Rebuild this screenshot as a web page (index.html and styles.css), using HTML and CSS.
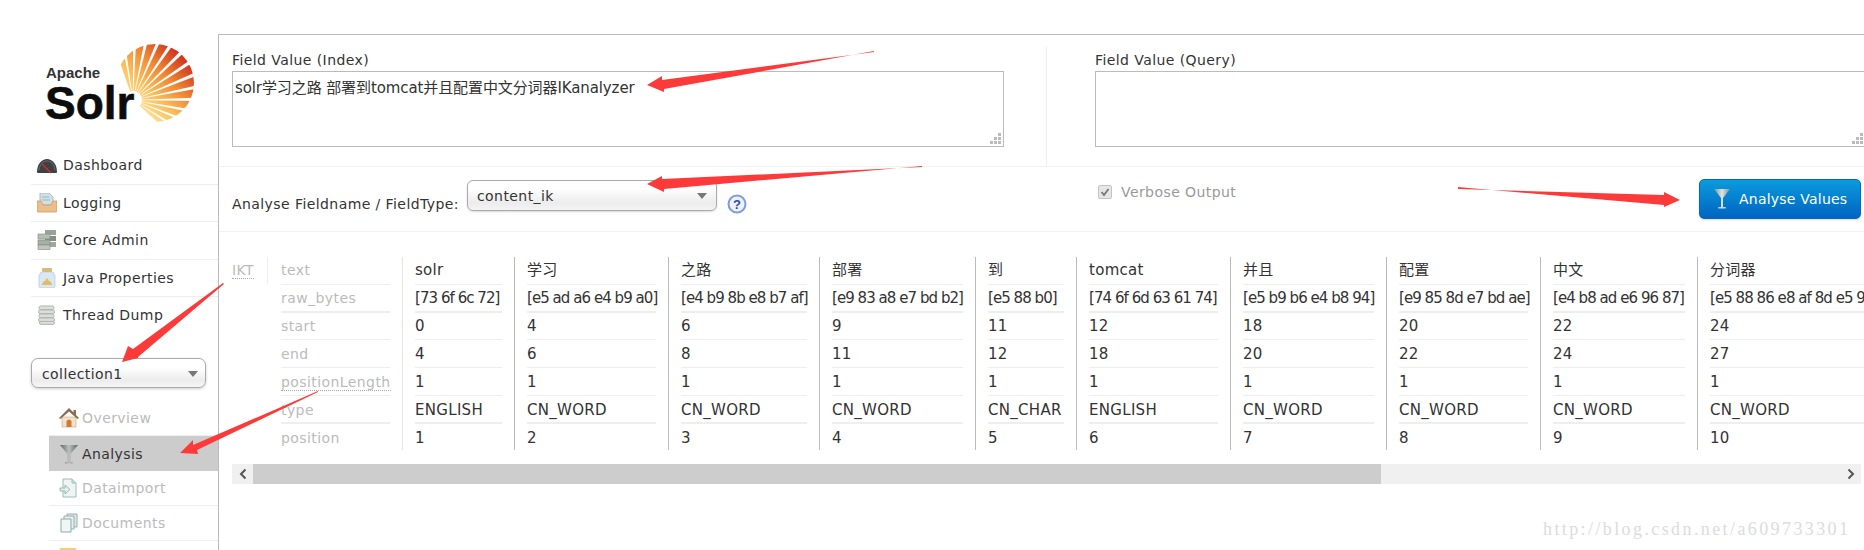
FILE: index.html
```html
<!DOCTYPE html>
<html lang="en">
<head>
<meta charset="utf-8">
<title>Solr Admin - Analysis</title>
<link rel="stylesheet" href="styles.css">
</head>
<body>
<div class="page">
  <aside class="sidebar">
    <svg class="logo" width="187" height="147" viewBox="31 0 187 147">
      <defs>
        <linearGradient id="sun" gradientUnits="userSpaceOnUse" x1="128" y1="112" x2="182" y2="58">
          <stop offset="0" stop-color="#fff0b4"/>
          <stop offset="0.38" stop-color="#fcc25e"/>
          <stop offset="0.7" stop-color="#ee8432"/>
          <stop offset="1" stop-color="#d3361f"/>
        </linearGradient>
        <clipPath id="disc"><circle cx="155" cy="83" r="39"/></clipPath>
      </defs>
      <g clip-path="url(#disc)" fill="url(#sun)">
        <path d="M133 100L192.4 153.5L199.3 144.7Z"/>
        <path d="M133 100L201.6 141.2L206.6 131.3Z"/>
        <path d="M133 100L208.2 127.4L211.2 116.6Z"/>
        <path d="M133 100L212 112.5L213 101.4Z"/>
        <path d="M133 100L212.9 97.2L211.8 86.1Z"/>
        <path d="M133 100L210.9 82L207.7 71.4Z"/>
        <path d="M133 100L206.1 67.5L200.8 57.6Z"/>
        <path d="M133 100L198.5 54.1L191.5 45.4Z"/>
        <path d="M133 100L188.6 42.5L180 35.3Z"/>
        <path d="M133 100L176.6 32.9L166.8 27.5Z"/>
        <path d="M133 100L163 25.8L152.4 22.4Z"/>
        <path d="M133 100L148.3 21.4L137.2 20.1Z"/>
        <path d="M133 100L133 20L121.9 20.8Z"/>
        <path d="M133 100L117.7 21.4L106.9 24.3Z"/>
      </g>
      <circle cx="133" cy="100" r="9" fill="#fff"/>
      <text class="logo-apache" x="46" y="78">Apache</text>
      <text class="logo-solr" x="45" y="119">Solr</text>
    </svg>

    <nav class="main-nav">
      <div class="nav-item">
        <svg class="icon" viewBox="0 0 20 20"><path d="M0 17C0 9 5 4 10 4s10 5 10 13c0 1-1 1-2 1H2c-1 0-2 0-2-1z" fill="#3d4045"/><path d="M2 15C3 9 6 6 10 6s7 3 8 9" fill="none" stroke="#6a6d72"/><path d="M5 9l9 9" stroke="#c8302c" stroke-width="1.4"/></svg>
        <span>Dashboard</span>
      </div>
      <div class="nav-item">
        <svg class="icon" viewBox="0 0 20 20"><path d="M3 0h9l4 4v8H3z" fill="#cfe0e6" stroke="#a8c0c8"/><path d="M5 4h7M5 7h8" stroke="#9fb8c0"/><path d="M0 8h4l2 4h8l2-4h4v10q0 1-1 1H1q-1 0-1-1z" fill="#eabf8c" stroke="#cf9a62" stroke-width=".8"/></svg>
        <span>Logging</span>
      </div>
      <div class="nav-item">
        <svg class="icon" viewBox="0 0 20 20"><rect x="8" y="0" width="11" height="5" fill="#9aa398"/><rect x="8" y="6" width="11" height="5" fill="#858e84"/><rect x="8" y="12" width="11" height="5" fill="#a0a89e"/><rect x="1" y="4" width="12" height="5" fill="#b6bdb4" stroke="#83897f" stroke-width=".6"/><rect x="1" y="10" width="12" height="5" fill="#a8afa6" stroke="#83897f" stroke-width=".6"/><rect x="1" y="15" width="12" height="4.5" fill="#c0c6bd" stroke="#83897f" stroke-width=".6"/></svg>
        <span>Core Admin</span>
      </div>
      <div class="nav-item">
        <svg class="icon" viewBox="0 0 20 20"><path d="M4 4h12l2 4v10q0 2-2 2H4q-2 0-2-2V8z" fill="#d9e8f2" stroke="#b4c8d6" stroke-width=".7"/><rect x="5" y="0" width="10" height="4" rx="1" fill="#d8bb7a"/><path d="M5 16l2-3h1l2-3 2 3h1l2 3v1H5z" fill="#e2bb62"/></svg>
        <span>Java Properties</span>
      </div>
      <div class="nav-item">
        <svg class="icon" viewBox="0 0 20 20" fill="#dcdedb" stroke="#b2b4b1"><rect x="2" y="1" width="15" height="3.6" rx="1.6"/><rect x="1.5" y="5" width="16" height="3.6" rx="1.6"/><rect x="2" y="9" width="15" height="3.6" rx="1.6"/><rect x="1.5" y="13" width="16" height="3.6" rx="1.6"/><rect x="2.5" y="16.4" width="15" height="3" rx="1.5"/></svg>
        <span>Thread Dump</span>
      </div>
    </nav>

    <div class="core-select">
      <span>collection1</span>
      <i class="caret"></i>
    </div>

    <nav class="core-nav">
      <div class="sub-item">
        <svg class="icon" viewBox="0 0 20 20"><path d="M3 9h14v10H3z" fill="#f2e2c8" stroke="#bca888" stroke-width=".6"/><path d="M10 0L0 10l1.5 1L10 3.5 18.5 11l1.5-1-3-3V2h-2.500v2.500z" fill="#8a6a50"/><path d="M7.500 19v-6q2.500-3 5 0v6z" fill="#d27a34"/></svg>
        <span>Overview</span>
      </div>
      <div class="sub-item active">
        <svg class="icon" viewBox="0 0 20 20"><defs><linearGradient id="fun" x1="0" x2="1" y1="0" y2="0"><stop offset="0" stop-color="#5f6361"/><stop offset=".5" stop-color="#bfc1bf"/><stop offset="1" stop-color="#5f6361"/></linearGradient></defs><path d="M1 1h18l-7.500 9v8h2v1.500H6V18h2.500v-8z" fill="url(#fun)"/></svg>
        <span>Analysis</span>
      </div>
      <div class="sub-item">
        <svg class="icon" viewBox="0 0 20 20"><path d="M4 1h9l4 4v14H4z" fill="#eef5f3" stroke="#9cbcb8"/><path d="M13 1v4h4" fill="#cfe0dc" stroke="#9cbcb8"/><path d="M1 10h5V7l5 4.500L6 16v-3H1z" fill="#e6efec" stroke="#88a8a4" stroke-width=".8"/></svg>
        <span>Dataimport</span>
      </div>
      <div class="sub-item">
        <svg class="icon" viewBox="0 0 20 20"><path d="M8 1h10v13H8z" fill="#dde9e8" stroke="#94b0ae"/><path d="M5 3h10v13H5z" fill="#e6f0ef" stroke="#94b0ae"/><path d="M2 6h10v13H2z" fill="#f0f6f5" stroke="#8daaa8"/></svg>
        <span>Documents</span>
      </div>
      <div class="sub-item sub-last">
        <svg class="icon" viewBox="0 0 20 20"><rect x="1" y="0" width="16" height="16" fill="#f2d06e"/></svg>
      </div>
    </nav>
  </aside>

  <main class="content">
    <section class="fields">
      <div class="field field-index">
        <label class="field-label">Field Value (Index)</label>
        <div class="area-wrap">
          <textarea class="area" readonly>solr学习之路 部署到tomcat并且配置中文分词器IKanalyzer</textarea>
          <svg class="grip" width="12" height="12" viewBox="0 0 12 12" fill="#bbb"><rect x="8" y="0" width="3" height="3"/><rect x="4" y="4" width="3" height="3"/><rect x="8" y="4" width="3" height="3"/><rect x="0" y="8" width="3" height="3"/><rect x="4" y="8" width="3" height="3"/><rect x="8" y="8" width="3" height="3"/></svg>
        </div>
      </div>
      <div class="field field-query">
        <label class="field-label">Field Value (Query)</label>
        <div class="area-wrap">
          <textarea class="area" readonly></textarea>
          <svg class="grip" width="12" height="12" viewBox="0 0 12 12" fill="#bbb"><rect x="8" y="0" width="3" height="3"/><rect x="4" y="4" width="3" height="3"/><rect x="8" y="4" width="3" height="3"/><rect x="0" y="8" width="3" height="3"/><rect x="4" y="8" width="3" height="3"/><rect x="8" y="8" width="3" height="3"/></svg>
        </div>
      </div>
    </section>

    <section class="settings">
      <div class="type-group">
        <span class="type-label">Analyse Fieldname / FieldType:</span>
        <div class="type-select"><span>content_ik</span><i class="caret"></i></div>
        <svg class="help" width="20" height="20" viewBox="0 0 20 20"><circle cx="10" cy="10" r="8.500" fill="#eef2fb" stroke="#7f9be0" stroke-width="2"/><text class="help-q" x="10" y="14.500">?</text></svg>
      </div>
      <div class="verbose">
        <svg width="14" height="14" viewBox="0 0 14 14"><rect x=".5" y=".5" width="13" height="13" rx="1.500" fill="#e6e6e6" stroke="#c4c4c4"/><path d="M3.500 7l2.500 3 4.500-6" fill="none" stroke="#777" stroke-width="1.800"/></svg>
        <span>Verbose Output</span>
      </div>
      <button class="analyse-btn" type="button">
        <svg width="18" height="24" viewBox="0 0 18 24"><defs><linearGradient id="fun2" x1="0" x2="1" y1="0" y2="0"><stop offset="0" stop-color="#7f8a90"/><stop offset=".5" stop-color="#dfe4e6"/><stop offset="1" stop-color="#7f8a90"/></linearGradient></defs><path d="M1 2h16l-7 9v9h3v1.500H5V20h3v-9z" fill="url(#fun2)"/></svg>
        <span>Analyse Values</span>
      </button>
    </section>

    <section class="analysis">
      <div class="tok"><abbr class="dotted">IKT</abbr></div>
      <div class="labels">
        <div class="cell">text</div>
        <div class="cell">raw_bytes</div>
        <div class="cell">start</div>
        <div class="cell">end</div>
        <div class="cell"><abbr class="dotted">positionLength</abbr></div>
        <div class="cell">type</div>
        <div class="cell">position</div>
      </div>
      <div class="col c1"><div class="cell">solr</div><div class="cell">[73 6f 6c 72]</div><div class="cell">0</div><div class="cell">4</div><div class="cell">1</div><div class="cell">ENGLISH</div><div class="cell">1</div></div>
      <div class="col c2"><div class="cell">学习</div><div class="cell">[e5 ad a6 e4 b9 a0]</div><div class="cell">4</div><div class="cell">6</div><div class="cell">1</div><div class="cell">CN_WORD</div><div class="cell">2</div></div>
      <div class="col c3"><div class="cell">之路</div><div class="cell">[e4 b9 8b e8 b7 af]</div><div class="cell">6</div><div class="cell">8</div><div class="cell">1</div><div class="cell">CN_WORD</div><div class="cell">3</div></div>
      <div class="col c4"><div class="cell">部署</div><div class="cell">[e9 83 a8 e7 bd b2]</div><div class="cell">9</div><div class="cell">11</div><div class="cell">1</div><div class="cell">CN_WORD</div><div class="cell">4</div></div>
      <div class="col c5"><div class="cell">到</div><div class="cell">[e5 88 b0]</div><div class="cell">11</div><div class="cell">12</div><div class="cell">1</div><div class="cell">CN_CHAR</div><div class="cell">5</div></div>
      <div class="col c6"><div class="cell">tomcat</div><div class="cell">[74 6f 6d 63 61 74]</div><div class="cell">12</div><div class="cell">18</div><div class="cell">1</div><div class="cell">ENGLISH</div><div class="cell">6</div></div>
      <div class="col c7"><div class="cell">并且</div><div class="cell">[e5 b9 b6 e4 b8 94]</div><div class="cell">18</div><div class="cell">20</div><div class="cell">1</div><div class="cell">CN_WORD</div><div class="cell">7</div></div>
      <div class="col c8"><div class="cell">配置</div><div class="cell">[e9 85 8d e7 bd ae]</div><div class="cell">20</div><div class="cell">22</div><div class="cell">1</div><div class="cell">CN_WORD</div><div class="cell">8</div></div>
      <div class="col c9"><div class="cell">中文</div><div class="cell">[e4 b8 ad e6 96 87]</div><div class="cell">22</div><div class="cell">24</div><div class="cell">1</div><div class="cell">CN_WORD</div><div class="cell">9</div></div>
      <div class="col c10"><div class="cell">分词器</div><div class="cell">[e5 88 86 e8 af 8d e5 99 a8]</div><div class="cell">24</div><div class="cell">27</div><div class="cell">1</div><div class="cell">CN_WORD</div><div class="cell">10</div></div>
    </section>

    <div class="scrollbar">
      <div class="sb-btn"><svg width="8" height="12" viewBox="0 0 8 12"><path d="M6.500 1.500L2 6l4.500 4.500" fill="none" stroke="#555" stroke-width="2"/></svg></div>
      <div class="sb-thumb"></div>
      <div class="sb-track"></div>
      <div class="sb-btn"><svg width="8" height="12" viewBox="0 0 8 12"><path d="M1.500 1.500L6 6l-4.500 4.500" fill="none" stroke="#555" stroke-width="2"/></svg></div>
    </div>
  </main>
</div>

<svg class="arrows" width="1864" height="550" viewBox="0 0 1864 550">
  <g fill="#fc3a3a">
    <path d="M874 51L874 52L662 80L662 76L647 85L664 92L664 89Z"/>
    <path d="M922 166L922 167L662 179L662 176L647 184L664 192L664 189Z"/>
    <path d="M1458 187L1458 189L1664 195L1664 192L1680 200L1664 207L1664 205Z"/>
    <path d="M223 283L224 284L138 357L138 358L122 362L128 346L133 349Z"/>
    <path d="M318 391L318 392L197 450L198 454L180 453L193 440L193 445Z"/>
  </g>
</svg>
<div class="watermark">http://blog.csdn.net/a609733301</div>
</body>
</html>
```
FILE: styles.css
```css
* { box-sizing: border-box; }
html, body { margin: 0; padding: 0; background: #fff; }
body {
  width: 1864px;
  height: 550px;
  overflow: hidden;
  position: relative;
  font-family: "DejaVu Sans", "Noto Sans CJK SC", sans-serif;
  font-size: 14px;
  letter-spacing: 0.42px;
  color: #333;
}
.page { display: flex; height: 550px; }

.sidebar { width: 218px; flex: none; padding-left: 31px; overflow: hidden; }
.logo { display: block; }
.logo-apache { font: bold 15px "Liberation Sans", sans-serif; fill: #333; letter-spacing: 0; }
.logo-solr { font: bold 46px "Liberation Sans", sans-serif; fill: #0c0c0c; letter-spacing: 0; stroke: #0c0c0c; stroke-width: .6px; }
.icon { width: 20px; height: 20px; flex: none; }

.nav-item {
  height: 37.5px;
  display: flex;
  align-items: center;
  gap: 6px;
  padding-left: 6px;
  border-bottom: 1px solid #eee;
}
.nav-item:last-child { border-bottom: 0; height: 36px; }

.core-select {
  margin-top: 25px;
  width: 175px;
  height: 30px;
  border: 1px solid #aaa;
  border-radius: 7px;
  background: linear-gradient(#fff 30%, #ececec 75%, #f6f6f6);
  box-shadow: 0 1px 3px rgba(0,0,0,.2);
  display: flex;
  align-items: center;
  justify-content: space-between;
  padding: 1px 7px 0 10px;
}
.caret {
  width: 0;
  height: 0;
  border-left: 5px solid transparent;
  border-right: 5px solid transparent;
  border-top: 6px solid #777;
}
.core-nav { margin: 13px 0 0 18px; }
.sub-item {
  height: 35px;
  display: flex;
  align-items: center;
  gap: 3px;
  padding-left: 10px;
  color: #bbb;
  border-bottom: 1px solid #eee;
}
.sub-item.active { background: #ccc; color: #333; border-bottom: 0; }
.sub-last { border-bottom: 0; align-items: flex-start; padding-top: 7px; }

.content {
  flex: 1;
  min-width: 0;
  margin-top: 34px;
  border-top: 1px solid #bbb;
  border-left: 1px solid #bbb;
  overflow: hidden;
}

.fields {
  display: flex;
  height: 132px;
  padding: 12px 0 0 13px;
  border-bottom: 1px solid #f2f2f2;
}
.field { display: flex; flex-direction: column; }
.field-index { width: 772px; flex: none; }
.field-query {
  width: 820px;
  flex: none;
  margin-left: 42px;
  padding-left: 48px;
  border-left: 1px solid #eee;
}
.field-label { height: 24px; line-height: 26px; display: block; }
.area-wrap { position: relative; height: 76px; }
.area {
  display: block;
  width: 100%;
  height: 76px;
  resize: none;
  border: 1px solid #bbb;
  border-radius: 0;
  outline: 0;
  padding: 6px 2px;
  margin: 0;
  font: 15px/20px "DejaVu Sans", "Noto Sans CJK SC", sans-serif;
  letter-spacing: -0.1px;
  color: #333;
  background: #fff;
}
.grip { position: absolute; right: 2px; bottom: 2px; }

.settings {
  height: 65px;
  display: flex;
  padding-left: 13px;
  border-bottom: 1px solid #f2f2f2;
}
.type-group { width: 866px; flex: none; display: flex; }
.type-label { width: 230px; flex: none; margin-top: 28px; line-height: 18px; }
.type-select {
  margin: 13px 0 0 5px;
  width: 250px;
  height: 31px;
  border: 1px solid #aaa;
  border-radius: 6px;
  background: linear-gradient(#fff 25%, #ececec 75%, #f4f4f4);
  box-shadow: 0 1px 2px rgba(0,0,0,.15);
  display: flex;
  align-items: center;
  justify-content: space-between;
  padding: 0 9px 0 9px;
}
.help { margin: 27px 0 0 10px; }
.help-q { font: bold 13px "Liberation Sans", sans-serif; fill: #2c4aa8; text-anchor: middle; letter-spacing: 0; }
.verbose { display: flex; gap: 9px; align-items: center; height: 18px; margin-top: 16px; color: #999; }
.analyse-btn {
  margin: 12px 3px 0 auto;
  width: 162px;
  height: 40px;
  border: 1px solid #0a66b0;
  border-radius: 5px;
  background: linear-gradient(#0a9bdd, #0064c2);
  color: #fff;
  display: flex;
  align-items: center;
  gap: 8px;
  padding: 0 0 0 13px;
  font: inherit;
  letter-spacing: 0.22px;
  box-shadow: 0 1px 2px rgba(0,0,0,.15);
}

.analysis {
  display: flex;
  height: 193px;
  margin-top: 25px;
  padding-left: 13px;
  overflow: hidden;
  white-space: nowrap;
}
.tok {
  width: 36px;
  height: 27px;
  flex: none;
  line-height: 27px;
  color: #bbb;
  border-right: 1px solid #eee;
}
.dotted { text-decoration: none; border-bottom: 1px dotted #aaa; }
.labels { width: 134px; flex: none; padding: 0 12px 0 13px; color: #bbb; }
.col { flex: none; padding: 0 12px; border-left: 1px solid #bbb; font-size: 15px; letter-spacing: 0.3px; }
.col.c1 { border-left-color: #e4e4e4; }
.c1 { width: 112px; }
.c2 { width: 154px; }
.c3 { width: 151px; }
.c4 { width: 156px; }
.c5 { width: 101px; }
.c6 { width: 154px; }
.c7 { width: 156px; }
.c8 { width: 154px; }
.c9 { width: 157px; }
.c10 { width: 200px; }

.cell {
  height: 28px;
  line-height: 26px;
  border-bottom: 1px solid #eee;
}
.cell:nth-child(2) { border-bottom-width: 2px; }
.col .cell:nth-child(2) { letter-spacing: -0.95px; }
.cell:nth-child(3) { height: 27px; }
.cell:nth-child(6) { border-bottom-width: 2px; }
.cell:nth-child(7) { height: 26px; border-bottom: 0; line-height: 28px; }
.cell:nth-child(4), .cell:nth-child(5), .cell:nth-child(6) { line-height: 28px; }

.scrollbar {
  display: flex;
  height: 20px;
  margin: 14px 3px 0 13px;
  background: #f0f0f0;
}
.sb-btn { width: 21px; flex: none; display: flex; align-items: center; justify-content: center; }
.sb-thumb { width: 1128px; flex: none; background: #cdcdcd; }
.sb-track { flex: 1; }

.arrows { position: absolute; left: 0; top: 0; pointer-events: none; }
.watermark {
  position: absolute;
  left: 1543px;
  top: 519px;
  font: 18px/20px "Liberation Serif", serif;
  letter-spacing: 2.4px;
  color: #dcdcdc;
  white-space: nowrap;
}
```
